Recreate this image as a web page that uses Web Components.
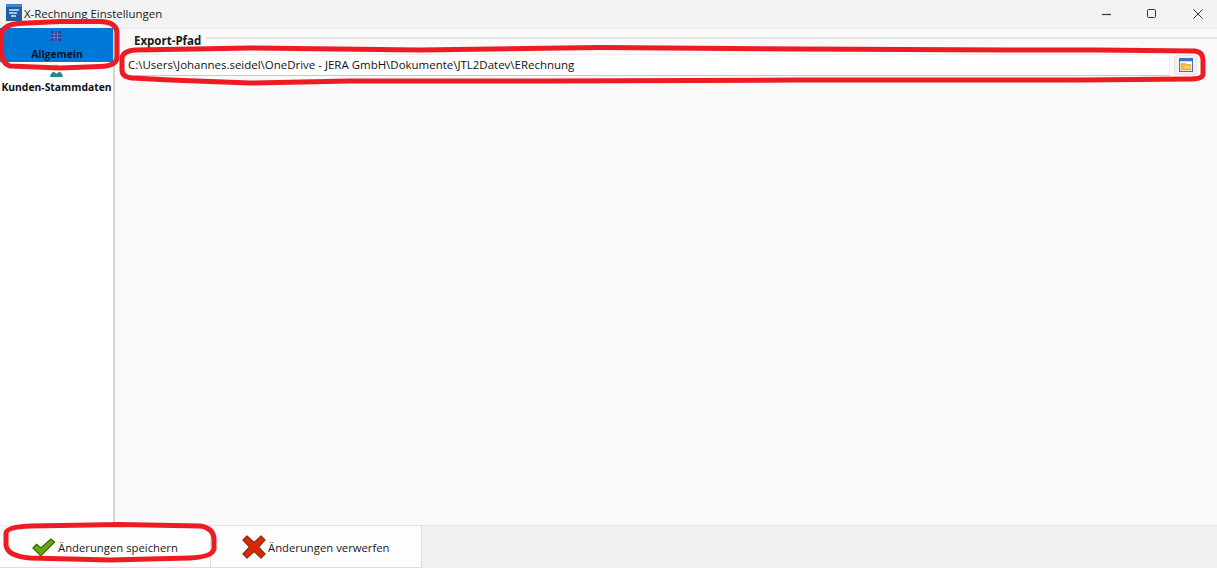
<!DOCTYPE html>
<html lang="de"><head><meta charset="utf-8"><title>X-Rechnung Einstellungen</title>
<style>
html,body{margin:0;padding:0;height:100%;overflow:hidden}
body{font-family:"Open Sans","Noto Sans",sans-serif;color:#111}
</style></head><body>
<x-window>
  <x-titlebar slot="title">X-Rechnung Einstellungen</x-titlebar>
  <x-nav-item slot="nav" active icon="grid">Allgemein</x-nav-item>
  <x-nav-item slot="nav" icon="people">Kunden-Stammdaten</x-nav-item>
  <x-group slot="main" label="Export-Pfad"><x-path-field value="C:\Users\Johannes.seidel\OneDrive - JERA GmbH\Dokumente\JTL2Datev\ERechnung"></x-path-field></x-group>
  <x-action slot="actions" icon="check" w="211" pad="32">Änderungen speichern</x-action>
  <x-action slot="actions" icon="cross" w="211" pad="31">Änderungen verwerfen</x-action>
  <x-annotations slot="over"></x-annotations>
</x-window>
<script>
function def(name,html,extra){
  customElements.define(name,class extends HTMLElement{
    constructor(){super();this.attachShadow({mode:'open'}).innerHTML=html}
    connectedCallback(){extra&&extra(this)}
  });
}
def('x-window',`<style>
:host{display:block;position:relative;width:1217px;height:568px;overflow:hidden;background:#f3f3f3}
.body{display:flex;height:497px}
nav{width:113px;background:#fff;border-right:2px solid #d4d4d4;flex:none;display:flex;flex-direction:column}
main{flex:1;background:#f9f9f9;border-top:1px solid #ececec;box-sizing:border-box;min-width:0}
footer{display:flex;height:43px;background:#f0f0f0;border-top:1px solid #e4e4e4;box-sizing:border-box}
</style>
<slot name="title"></slot>
<div class="body"><nav><slot name="nav"></slot></nav><main><slot name="main"></slot></main></div>
<footer><slot name="actions"></slot></footer>
<slot name="over"></slot>`);
def('x-titlebar',`<style>
:host{display:flex;align-items:center;height:28px;background:#f3f3f3;font-size:11.45px;color:#1a1a1a}
svg.app{margin-left:6px;margin-right:2px;margin-bottom:3px;flex:none}
span{flex:1;padding-bottom:2px}
.c{display:flex;align-items:center;justify-content:center;width:45px;height:28px}
.x{width:38px;margin-left:5px}
</style>
<svg class="app" width="16" height="17" viewBox="0 0 16 17"><rect width="16" height="17" fill="#1f5f9f"/><rect x="0" y="0" width="16" height="3" fill="#3f87c7"/><path d="M3 6h10M3 9h8M5 12h5" stroke="#cfe6f8" stroke-width="1.3"/></svg>
<span><slot></slot></span>
<div class="c"><svg width="10" height="10" viewBox="0 0 10 10"><path d="M0 5.500h9" stroke="#333" stroke-width="1.200"/></svg></div>
<div class="c"><svg width="10" height="10" viewBox="0 0 10 10"><rect x=".5" y=".5" width="8" height="8" rx="1" fill="none" stroke="#333"/></svg></div>
<div class="c x"><svg width="10" height="10" viewBox="0 0 10 10"><path d="M.5.5l9 9M9.500.5l-9 9" stroke="#333" stroke-width="1"/></svg></div>`);
const icons={
 grid:`<svg width="10" height="10" viewBox="0 0 10 10" style="margin-right:2px"><rect x="3.300" width="6.700" height="10" fill="#2c3f9a"/><rect y="3.300" width="10" height="6.700" fill="#2c3f9a"/><rect width="3" height="3" fill="#2c3f9a"/><path d="M0 3.200h10M0 6.600h10M3.200 0v10M6.600 0v10" stroke="#7f9ad8" stroke-width=".7"/></svg>`,
 people:`<svg width="13" height="13" viewBox="0 0 13 13"><circle cx="6.500" cy="3" r="2.800" fill="#f4c9ad"/><path d="M0 13C.5 9.500 2.500 8 3.500 8S6 9 6.500 10C7 9 8.500 8 9.500 8S12.500 9.500 13 13z" fill="#1f8a8a"/></svg>`,
 check:`<svg width="24" height="19" viewBox="0 0 26 20"><path d="M1 10.500 5 6.500 9.500 10.500 20.500 .8 24.500 4 9.500 19z" fill="#66a80f" stroke="#3b6a0a" stroke-width="1.300" stroke-linejoin="round"/></svg>`,
 cross:`<svg width="24" height="24" viewBox="0 0 24 24"><path d="M1 5 5 1 12 7.500 19 1 23 5 16.500 12 23 19 19 23 12 16.500 5 23 1 19 7.500 12z" fill="#d92a06" stroke="#8f2a18" stroke-width="1.200" stroke-linejoin="round"/></svg>`
};
def('x-nav-item',`<style>
:host{display:block;height:37px;box-sizing:border-box;padding-top:2px;text-align:center;font-size:10.35px;font-weight:700;line-height:15px;color:#111}
:host([active]){height:34px;background:#0078d7;padding-top:3px;color:#08131f}
:host([active]) .t{padding-left:1px}
#i{display:flex;justify-content:center;height:15.500px}
.t{white-space:nowrap}
</style><div id="i"></div><div class="t"><slot></slot></div>`,el=>{el.shadowRoot.getElementById('i').innerHTML=icons[el.getAttribute('icon')]});
def('x-group',`<style>
:host{display:block;position:relative;padding:8px 20px 0 8px}
.rule{height:2px;background:#e6e6e6;margin:0 -20px 0 6px}
.l{position:absolute;left:14px;top:5px;background:#f9f9f9;padding:0 5px;font-size:11.500px;line-height:14px;font-weight:700;color:#1a1a1a}
.in{padding-top:15px}
</style><div class="rule"></div><div class="l" id="l"></div><div class="in"><slot></slot></div>`,el=>{el.shadowRoot.getElementById('l').textContent=el.getAttribute('label')});
def('x-path-field',`<style>
:host{display:flex;align-items:center;gap:4px}
.f{flex:1;height:22px;box-sizing:border-box;background:#fff;border:1px solid #efefef;border-bottom:1px solid #c8c8c8;padding-left:4px;font-size:11.480px;line-height:20px;color:#111;white-space:nowrap}
.b{width:23px;height:20px;background:#f1f1f1;border:1px solid #e6e6e6;box-sizing:border-box;border-radius:3px;display:flex;align-items:center;justify-content:center}
</style><div class="f" id="f"></div><div class="b"><svg width="14" height="14" viewBox="0 0 13 13"><rect x=".5" y=".5" width="12" height="12" fill="#fff" stroke="#3f72c4"/><rect x="0" y="0" width="13" height="3" fill="#3f72c4"/><rect x="1" y="1" width="2" height="1" fill="#d33"/><path d="M2 5h4l1 1h4v5H2z" fill="#f5b93d" stroke="#c98a1c" stroke-width=".5"/><rect x="5" y="8" width="6" height="1" fill="#ffe89a"/></svg></div>`,el=>{el.shadowRoot.getElementById('f').textContent=el.getAttribute('value')});
def('x-action',`<style>
:host{display:flex;align-items:center;box-sizing:border-box;background:#fdfdfd;border-right:1px solid #dfdfdf;border-bottom:1px solid #dfdfdf;font-size:11.300px;color:#1a1a1a;gap:2px;height:42px;padding-top:1px}
#i{display:flex;flex:none}
</style><div id="i"></div><div><slot></slot></div>`,el=>{el.style.width=el.getAttribute('w')+'px';el.style.paddingLeft=el.getAttribute('pad')+'px';el.shadowRoot.getElementById('i').innerHTML=icons[el.getAttribute('icon')]});
def('x-annotations',`<style>
:host{position:absolute;inset:0;pointer-events:none;display:block}
svg{position:absolute;inset:0}
path{fill:none;stroke:#ed1c24;stroke-width:5;stroke-linejoin:round}
</style><svg width="1217" height="568" viewBox="0 0 1217 568">
<path d="M18 23.500L60 21.500H100Q116 22 117 32V56Q118 66 100 66.500L60 68L10 66Q2 64 1.500 52V34Q3 25 18 23.500Z"/>
<path d="M135 50L250 48 420 50 600 47.500 800 49 1010 50 1095 50 1195 51Q1203 52 1203 60V74Q1203 79 1190 79L1080 80 800 80 550 81 350 81 250 83 170 80 132 78Q122 77 122 70V58Q123 51 135 50Z"/>
<path d="M30 526L120 524.500 200 526Q214 528 214 540V549Q212 557 190 558L110 560 30 558Q7 556 6 545V533Q7 527 30 526Z"/>
</svg>`);
</script></body></html>
